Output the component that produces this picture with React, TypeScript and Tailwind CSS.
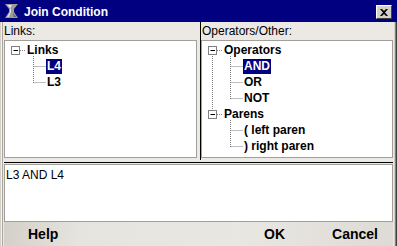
import React from "react";

const font = { fontFamily: '"Liberation Sans", Arial, sans-serif' };

type Row = { label: string; selected?: boolean; x: number };

function TreeBox({ rows, lines }: { rows: Row[]; lines: React.ReactNode }) {
  return (
    <div className="relative flex-1 bg-white border border-[#a09f9a] pt-[1px]">
      <svg className="absolute left-[-1px] top-[-1px]" width="200" height="120">
        {lines}
      </svg>
      {rows.map((r) => (
        <div key={r.label} className="relative h-[16px] flex items-center" style={{ paddingLeft: r.x - 1 }}>
          <span
            className={`px-[1px] h-[15px] leading-[15px] text-[12px] font-bold ${
              r.selected ? "bg-[#000080] text-white" : "text-black"
            }`}
          >
            {r.label}
          </span>
        </div>
      ))}
    </div>
  );
}

function Expander({ cy }: { cy: number }) {
  return (
    <g>
      <rect x="7.5" y={cy - 4.5} width="8" height="8" fill="white" stroke="#808080" />
      <line x1="9.5" y1={cy - 0.5} x2="14" y2={cy - 0.5} stroke="black" />
      <line x1="16" y1={cy - 0.5} x2="22" y2={cy - 0.5} stroke="#808080" strokeDasharray="1 1" />
    </g>
  );
}

function HLine({ cy }: { cy: number }) {
  return <line x1="29.5" y1={cy - 0.5} x2="42" y2={cy - 0.5} stroke="#808080" strokeDasharray="1 1" />;
}

function VLine({ x, y1, y2 }: { x: number; y1: number; y2: number }) {
  return <line x1={x + 0.5} y1={y1} x2={x + 0.5} y2={y2} stroke="#808080" strokeDasharray="1 1" />;
}

export default function App() {
  return (
    <div className="w-[397px] h-[246px] flex flex-col bg-[#ece9e4] overflow-hidden" style={font}>
      {/* title bar */}
      <div className="h-[22px] shrink-0 bg-[#000080] flex items-start pl-[5px] pr-[5px]">
        <svg width="13" height="15" viewBox="0 0 13 15" className="mt-[4px]">
          <path d="M0 0 L13 0 L9 5 L9 8 L13 14 L0 14 L4 8 L4 5 Z" fill="#9a9a9a" />
          <path d="M2 1 L7 1 L5 5 L5 8 L2 13 L4 13 L6 8 L6 5 Z" fill="#e0e0e0" />
          <path d="M8 9 L11 13 L9 13 Z" fill="#5a5a5a" />
        </svg>
        <span className="ml-[6px] text-white font-bold text-[12px] leading-[20px] pt-[2px]">Join Condition</span>
        <div className="flex-1" />
        <div className="mt-[5px] w-[16px] h-[14px] bg-[#d4d0c8] border border-t-white border-l-white border-r-[#404040] border-b-[#404040] flex items-center justify-center">
          <svg width="8" height="7" viewBox="0 0 8 7">
            <path d="M0 0 L2 0 L4 2 L6 0 L8 0 L5 3.5 L8 7 L6 7 L4 5 L2 7 L0 7 L3 3.5 Z" fill="black" />
          </svg>
        </div>
      </div>

      {/* body with frame */}
      <div className="flex-1 flex">
        <div className="w-[4px] bg-[linear-gradient(to_right,#d4d0c8_0_1px,#f4f3f0_1px_2px,#a8a6a0_2px_3px,#ece9e4_3px)]" />
        <div className="flex-1 flex flex-col">
          {/* split panes */}
          <div className="h-[138px] flex">
            <div className="w-[193px] flex flex-col pb-[2px]">
              <div className="h-[18px] leading-[18px] text-[12px] text-black">Links:</div>
              <TreeBox
                rows={[
                  { label: "Links", x: 22 },
                  { label: "L4", x: 42, selected: true },
                  { label: "L3", x: 42 },
                ]}
                lines={
                  <>
                    <Expander cy={11} />
                    <VLine x={29} y1={16} y2={43} />
                    <HLine cy={27} />
                    <HLine cy={43} />
                  </>
                }
              />
            </div>
            <div className="w-[4px] flex">
              <div className="w-[3px]" />
              <div className="w-[1px] bg-black" />
            </div>
            <div className="flex-1 flex flex-col pb-[2px]">
              <div className="h-[18px] leading-[18px] text-[12px] text-black pl-[1px]">Operators/Other:</div>
              <TreeBox
                rows={[
                  { label: "Operators", x: 22 },
                  { label: "AND", x: 42, selected: true },
                  { label: "OR", x: 42 },
                  { label: "NOT", x: 42 },
                  { label: "Parens", x: 22 },
                  { label: "( left paren", x: 42 },
                  { label: ") right paren", x: 42 },
                ]}
                lines={
                  <>
                    <VLine x={11} y1={16} y2={70} />
                    <Expander cy={11} />
                    <VLine x={29} y1={16} y2={59} />
                    <HLine cy={27} />
                    <HLine cy={43} />
                    <HLine cy={59} />
                    <Expander cy={75} />
                    <VLine x={29} y1={80} y2={107} />
                    <HLine cy={91} />
                    <HLine cy={107} />
                  </>
                }
              />
            </div>
          </div>

          {/* horizontal divider */}
          <div className="h-[4px] flex flex-col">
            <div className="h-[2px]" />
            <div className="h-[1px] bg-black" />
          </div>

          {/* condition text */}
          <div className="h-[58px] bg-white border border-[#a09f9a] pt-[3px] pl-[1px] text-[12px] leading-[14px] text-black">
            L3 AND L4
          </div>

          {/* buttons */}
          <div className="h-[24px] flex items-start bg-[linear-gradient(100deg,#d3d0c8_0%,#e6e4df_20%,#e9e7e2_60%,#dedbd5_100%)] text-[14px] font-bold leading-[24px] text-black">
            <span className="ml-[24px]">Help</span>
            <div className="flex-1" />
            <span>OK</span>
            <span className="ml-[47px] mr-[15px]">Cancel</span>
          </div>
        </div>
        <div className="w-[4px] bg-[linear-gradient(to_right,#ece9e4_0_1px,#d4d0c8_1px_2px,#808080_2px_3px,#404040_3px)]" />
      </div>
    </div>
  );
}
